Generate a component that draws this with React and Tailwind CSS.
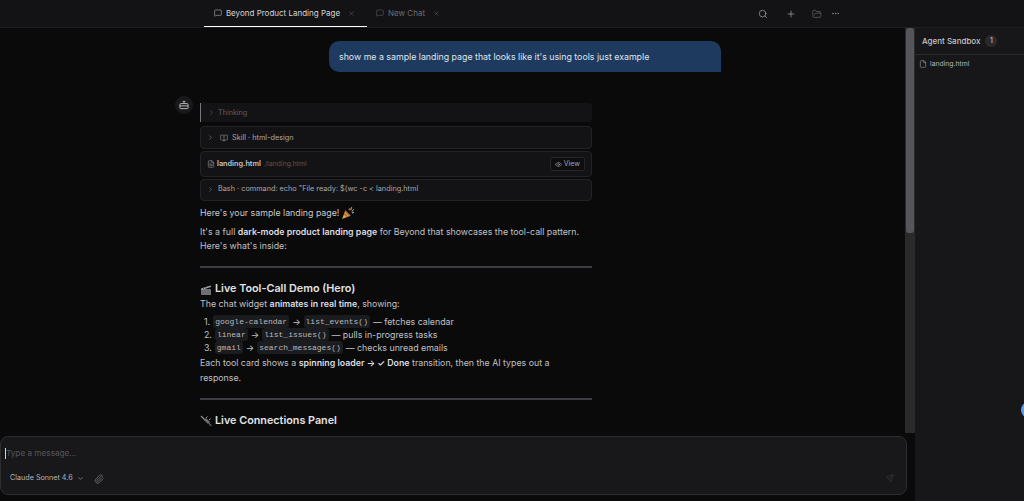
import { BookOpen, ChevronDown, ChevronRight, Eye, File, FileText, FolderOpen, MessageSquare, MoreHorizontal, Paperclip, Plus, Search, Send, X } from 'lucide-react'

const Code = ({ children }) => (
  <code className="rounded-[3px] bg-[#1b1c1f] px-[2px] py-[2px] font-['Liberation_Mono',monospace] text-[8px] leading-[9px] text-[#b8b8bd]">{children}</code>
)

const BotGlyph = () => (
  <svg width="10" height="10" viewBox="0 0 11 11" fill="none" stroke="currentColor" strokeWidth="1">
    <rect x="1" y="4" width="9" height="5.5" rx="1" />
    <path d="M5.5 4V2M4 1.5h3M1 6.5h9" />
  </svg>
)

const Party = () => (
  <svg width="14" height="14" viewBox="0 0 13 13" className="ml-[2px]">
    <path d="M1 12 L4 4 L9 9 Z" fill="#d9a441" />
    <path d="M3 7 L6 10 M4 5 L8 9" stroke="#b3542f" strokeWidth="1" />
    <circle cx="8" cy="3" r="1" fill="#d65a5a" />
    <circle cx="11" cy="6" r="1" fill="#6aa7d8" />
    <path d="M10 1 L9 4 M12 3 L10 5" stroke="#e3c65c" strokeWidth="0.8" />
  </svg>
)

const Clapper = () => (
  <svg width="12" height="12" viewBox="0 0 12 12">
    <rect x="1" y="5" width="10" height="6" rx="0.5" fill="#6d6f75" />
    <path d="M1 4.5 L10.5 1.5 L11 3 L1.5 6 Z" fill="#a9abb0" />
    <path d="M3 4 L4 5.2 M5.5 3.2 L6.5 4.4 M8 2.5 L9 3.6" stroke="#333" strokeWidth="0.8" />
  </svg>
)

const PlugIcon = () => (
  <svg width="12" height="12" viewBox="0 0 12 12">
    <path d="M1 1 L5 5" stroke="#8a8c92" strokeWidth="1.2" />
    <path d="M4 5 L6 3 L10 7 L8 9 Z" fill="#6d6f75" />
    <path d="M9 8 L11 11" stroke="#5c5e63" strokeWidth="1.4" />
    <path d="M6 3 L7.5 1.5 M9 5 L10.5 3.5" stroke="#a9abb0" strokeWidth="0.9" />
  </svg>
)

function Tab({ label, active }) {
  return (
    <div className={`flex h-[27px] items-center border-b ${active ? 'w-[163px] justify-center border-white pr-[2px] text-[#d4d4d8]' : 'ml-[1px] w-[80px] justify-center border-transparent text-[#6b6b72]'}`}>
      <MessageSquare size={8} strokeWidth={1.5} />
      <span className="ml-[4px] text-[8px]">{label}</span>
      <X size={7} strokeWidth={1.5} className="ml-[8px] text-[#6b6b72]" />
    </div>
  )
}

function ToolRow({ children, className = '' }) {
  return (
    <div className={`flex items-center rounded-[4px] border border-[#232327] bg-[#131316] pl-[6px] pr-[6px] text-[7.3px] text-[#a8a8ae] ${className}`}>
      {children}
    </div>
  )
}

export default function App() {
  return (
    <div className="relative flex h-[501px] w-[1024px] flex-col overflow-hidden bg-[#0a0a0b] font-['Inter',sans-serif]">
      <header className="flex h-[28px] shrink-0 items-center border-b border-[#1f1f23] bg-[#131316] pl-[204px]">
        <Tab label="Beyond Product Landing Page" active />
        <Tab label="New Chat" />
        <div className="ml-auto flex items-center pr-[184px] text-[#b4b4ba]">
          <Search size={10} strokeWidth={1.5} />
          <Plus size={10} strokeWidth={1.5} className="ml-[18px]" />
          <FolderOpen size={10} strokeWidth={1.2} className="ml-[16px] text-[#8a8a90]" />
          <MoreHorizontal size={9} className="ml-[9px] text-[#8a8a90]" />
        </div>
      </header>

      <div className="flex min-h-0 flex-1">
        <div className="flex w-[915px] shrink-0 flex-col">
          <div className="flex h-[405px] shrink-0">
            <main className="h-full w-[905px] overflow-hidden pt-[13px]">
              <div className="ml-[329px] flex h-[31px] w-[392px] items-center rounded-t-[10px] rounded-bl-[10px] bg-[#1e3a5f] pl-[10px] text-[8.8px] text-[#dfe4ea]">
                show me a sample landing page that looks like it's using tools just example
              </div>

              <div className="ml-[175px] mt-[24px] flex">
                <div className="flex h-[18px] w-[18px] shrink-0 items-center justify-center rounded-full bg-[#19191c] text-[#c4c4c8]">
                  <BotGlyph />
                </div>
                <div className="ml-[7px] mt-[7px] w-[392px]">
                  <div className="flex h-[19px] items-center rounded-r-[3px] border-l border-[#77777c] bg-[#131316] pl-[7px] text-[7.2px] text-[#5f5f66]">
                    <ChevronRight size={7} />
                    <span className="ml-[3px] mt-[2px]">Thinking</span>
                  </div>
                  <ToolRow className="mt-[4px] h-[23px]">
                    <ChevronRight size={7} className="text-[#85858c]" />
                    <BookOpen size={8} strokeWidth={1.5} className="ml-[6px]" />
                    <span className="ml-[4px] mt-px">Skill · html-design</span>
                  </ToolRow>
                  <ToolRow className="mt-[2px] h-[26px] justify-between">
                    <div className="flex items-center">
                      <FileText size={8} strokeWidth={1.5} />
                      <span className="ml-[2px] font-semibold text-[#c4c4c8]">landing.html</span>
                      <span className="ml-[4px] text-[6.8px] text-[#55555c]">/landing.html</span>
                    </div>
                    <div className="flex h-[14px] items-center rounded-[2px] border border-[#26262a] bg-[#0d0d0f] px-[4px] text-[7px] text-[#a1a1a8]">
                      <Eye size={7} />
                      <span className="ml-[2px]">View</span>
                    </div>
                  </ToolRow>
                  <ToolRow className="mt-[2px] h-[22px] pb-px">
                    <ChevronRight size={7} className="text-[#85858c]" />
                    <span className="ml-[4px]">Bash · command: echo "File ready: $(wc -c &lt; landing.html</span>
                  </ToolRow>

                  <p className="mt-[5px] flex h-[14px] items-center text-[8.8px] text-[#c8c8cc]">Here's your sample landing page! <Party /></p>
                  <p className="mt-[5px] text-[8.8px] leading-[14px] text-[#c0c0c5]">
                    It's a full <strong className="font-semibold text-[#dcdce0]">dark-mode product landing page</strong> for Beyond that showcases the tool-call pattern. Here's what's inside:
                  </p>
                  <hr className="mt-[13px] h-[2px] border-0 bg-[#3c3d44]" />
                  <h2 className="mt-[14px] flex h-[15px] items-center text-[10.8px] font-semibold text-[#e2e2e6]">
                    <Clapper /><span className="ml-[3px]">Live Tool-Call Demo (Hero)</span>
                  </h2>
                  <p className="text-[8.8px] leading-[14px] text-[#c0c0c5]">
                    The chat widget <strong className="font-semibold text-[#dcdce0]">animates in real time</strong>, showing:
                  </p>
                  <ol className="mt-[4px] text-[8.8px] leading-[13px] text-[#c0c0c5]">
                    <li className="flex h-[13px] items-center gap-[3px] pl-[4px]">1. <Code>google-calendar</Code> → <Code>list_events()</Code> — fetches calendar</li>
                    <li className="flex h-[13px] items-center gap-[3px] pl-[4px]">2. <Code>linear</Code> → <Code>list_issues()</Code> — pulls in-progress tasks</li>
                    <li className="flex h-[13px] items-center gap-[3px] pl-[4px]">3. <Code>gmail</Code> → <Code>search_messages()</Code> — checks unread emails</li>
                  </ol>
                  <p className="mt-[1px] text-[8.8px] leading-[15px] text-[#c0c0c5]">
                    Each tool card shows a <strong className="font-semibold text-[#dcdce0]">spinning loader → ✓ Done</strong> transition, then the AI types out a response.
                  </p>
                  <hr className="mt-[13px] h-[2px] border-0 bg-[#3c3d44]" />
                  <h2 className="mt-[13px] flex h-[16px] items-center text-[10.8px] font-semibold text-[#e2e2e6]">
                    <PlugIcon /><span className="ml-[3px]">Live Connections Panel</span>
                  </h2>
                </div>
              </div>
            </main>
            <div className="h-full w-[10px] bg-[#2a2a2c] px-px">
              <div className="h-[205px] rounded-[3px] bg-[#55555a]" />
            </div>
          </div>

          <div className="mt-[3px] flex h-[59px] w-[907px] flex-col rounded-[8px] border border-[#2c2c31] bg-[#18181b] pb-[10px] pl-[4px] pr-[12px] pt-[9px]">
            <div className="flex h-[14px] items-center text-[8.2px] text-[#55555c]">
              <span className="h-[11px] w-px bg-[#d4d4d8]" />
              <span>Type a message...</span>
            </div>
            <div className="mt-auto flex items-center pl-[5px] text-[#b4b4ba]">
              <span className="text-[7.2px]">Claude Sonnet 4.6</span>
              <ChevronDown size={7} className="ml-[4px]" />
              <Paperclip size={10} strokeWidth={1.5} className="ml-[10px] text-[#8a8a90]" />
              <Send size={9} strokeWidth={1.5} className="ml-auto text-[#3f3f45]" />
            </div>
          </div>
        </div>

        <aside className="flex-1 bg-[#17171a]">
          <div className="flex h-[27px] items-center border-b border-[#2a2a2e] pl-[7px]">
            <span className="text-[8px] font-medium text-[#c4c4c8]">Agent Sandbox</span>
            <span className="ml-[5px] flex h-[12px] w-[12px] items-center justify-center rounded-full bg-[#2a2a2e] text-[7px] text-[#d4d4d8]">1</span>
          </div>
          <div className="flex h-[18px] items-center pl-[4px] text-[#b4b4ba]">
            <File size={8} strokeWidth={1.5} />
            <span className="ml-[3px] text-[6.8px]">landing.html</span>
          </div>
        </aside>
      </div>

      <div className="absolute left-[1021px] top-[402px] h-[16px] w-[16px] rounded-full bg-[#5b9cf0]" />
    </div>
  )
}
